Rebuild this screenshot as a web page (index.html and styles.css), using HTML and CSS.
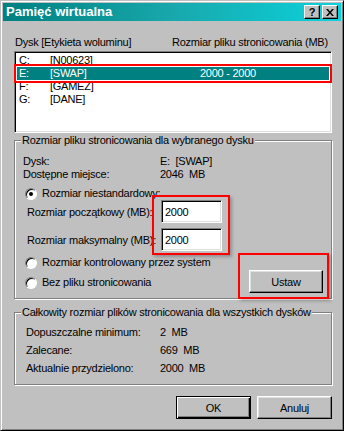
FILE: index.html
```html
<!DOCTYPE html>
<html lang="pl">
  <head>
    <meta charset="UTF-8" />
    <title>Pamięć wirtualna</title>
    <link rel="stylesheet" href="styles.css">
  </head>
  <body>
    <div class="window">
      <div class="titlebar">
        <span class="title">Pamięć wirtualna</span>
        <div class="title-buttons">
          <span class="tbtn help">?</span>
          <span class="tbtn close">
            <svg width="8" height="7" viewBox="0 0 8 7">
              <path d="M0 0h2l2 2.5 2-2.5h2l-3 3.5 3 3.5h-2l-2-2.5-2 2.5h-2l3-3.5z" fill="#000" />
            </svg>
          </span>
        </div>
      </div>

      <div class="content">
        <div class="list-head">
          <span class="col-name">Dysk [Etykieta woluminu]</span>
          <span class="col-size">Rozmiar pliku stronicowania (MB)</span>
        </div>
        <div class="listbox">
          <div class="row"><span class="c-drive">C:</span><span class="c-label">[N00623]</span></div>
          <div class="row sel"><span class="c-drive">E:</span><span class="c-label">[SWAP]</span><span class="c-size">2000 - 2000</span></div>
          <div class="row"><span class="c-drive">F:</span><span class="c-label">[GAMEZ]</span></div>
          <div class="row"><span class="c-drive">G:</span><span class="c-label">[DANE]</span></div>
        </div>

        <fieldset class="group group-drive">
          <legend>Rozmiar pliku stronicowania dla wybranego dysku</legend>
          <div class="info first"><span class="info-label">Dysk:</span><span class="val">E:  [SWAP]</span></div>
          <div class="info"><span class="info-label">Dostępne miejsce:</span><span class="val">2046  MB</span></div>

          <label class="option first"><span class="radio checked"></span>Rozmiar niestandardowy:</label>
          <div class="size-row">
            <span class="size-label">Rozmiar początkowy (MB):</span>
            <input class="field" type="text" value="2000">
          </div>
          <div class="size-row gap">
            <span class="size-label">Rozmiar maksymalny (MB):</span>
            <input class="field" type="text" value="2000">
          </div>

          <div class="option-set">
            <div class="options">
              <label class="option"><span class="radio"></span>Rozmiar kontrolowany przez system</label>
              <label class="option second"><span class="radio"></span>Bez pliku stronicowania</label>
            </div>
            <button class="btn btn-set">Ustaw</button>
          </div>
        </fieldset>

        <fieldset class="group group-total">
          <legend>Całkowity rozmiar plików stronicowania dla wszystkich dysków</legend>
          <div class="total first"><span class="total-label">Dopuszczalne minimum:</span><span class="val">2  MB</span></div>
          <div class="total"><span class="total-label">Zalecane:</span><span class="val">669  MB</span></div>
          <div class="total"><span class="total-label">Aktualnie przydzielono:</span><span class="val">2000  MB</span></div>
        </fieldset>

        <div class="actions">
          <button class="btn btn-default">OK</button>
          <button class="btn">Anuluj</button>
        </div>
      </div>

      <div class="mark mark-inputs"></div>
      <div class="mark mark-set"></div>
    </div>
  </body>
</html>
```

FILE: styles.css
```css
body {
  margin: 0;
  font: 11px "Liberation Sans", Arial, sans-serif;
  color: #000;
}

.window {
  position: relative;
  width: 344px;
  height: 431px;
  box-sizing: border-box;
  padding: 2px;
  background: #c0c0c0;
  border: 1px solid;
  border-color: #c0c0c0 #000 #000 #c0c0c0;
  box-shadow: inset 1px 1px #fff, inset -1px -1px #808080;
  white-space: nowrap;
  letter-spacing: -0.25px;
}

.titlebar {
  display: flex;
  align-items: center;
  justify-content: space-between;
  height: 18px;
  padding: 0 3px 0 3px;
  background: linear-gradient(to right, #008080, #18a8ac 50%, #0cd2dc);
}
.title {
  color: #fff;
  font-weight: bold;
  font-size: 13px;
  line-height: 18px;
  letter-spacing: 0;
}
.title-buttons {
  display: flex;
  gap: 2px;
}
.tbtn {
  display: flex;
  align-items: center;
  justify-content: center;
  width: 16px;
  height: 14px;
  box-sizing: border-box;
  background: #c0c0c0;
  border: 1px solid;
  border-color: #fff #000 #000 #fff;
  box-shadow: inset -1px -1px #808080;
  font-weight: bold;
  font-size: 11px;
  line-height: 12px;
  letter-spacing: 0;
}

.content {
  padding: 0 9px 0 11px;
}

.list-head {
  display: flex;
  margin-top: 15px;
  height: 13px;
  line-height: 13px;
  padding-left: 1px;
}
.col-name {
  flex: none;
  width: 157px;
}
.col-size {
  flex: none;
}

.listbox {
  margin-top: 2px;
  height: 82px;
  box-sizing: border-box;
  background: #fff;
  border: 1px solid;
  border-color: #808080 #fff #fff #808080;
  box-shadow: inset 1px 1px #000, inset -1px -1px #dfdfdf;
  padding: 2px 2px 0 2px;
}
.row {
  display: flex;
  height: 13px;
  line-height: 13px;
}
.row.sel {
  background: #008080;
  color: #fff;
  outline: 2px solid #f00;
  outline-offset: 1px;
}
.c-drive {
  flex: none;
  width: 31px;
  padding-left: 2px;
}
.c-label {
  flex: none;
  width: 150px;
}

.group {
  margin: 0;
  padding: 0 0 5px 0;
  border: 1px solid #808080;
  box-shadow: inset 1px 1px #fff, 1px 1px #fff;
}
.group legend {
  margin-left: 6px;
  padding: 0 1px;
  line-height: 13px;
  background: #c0c0c0;
}
.group-drive {
  margin-top: 1px;
}

.info {
  display: flex;
  height: 13px;
  line-height: 13px;
  padding-left: 8px;
}
.info.first {
  margin-top: 8px;
}
.info-label {
  flex: none;
  width: 137px;
}
.val {
  white-space: pre;
}

.option {
  display: flex;
  align-items: center;
  height: 13px;
  line-height: 13px;
  padding-left: 10px;
}
.option.first {
  margin-top: 6px;
}
.option.second {
  margin-top: 7px;
}
.radio {
  position: relative;
  flex: none;
  width: 12px;
  height: 12px;
  box-sizing: border-box;
  margin-right: 5px;
  border-radius: 50%;
  background: #fff;
  border: 1px solid;
  border-color: #808080 #fff #fff #808080;
  box-shadow: inset 1px 1px #000;
}
.radio.checked::after {
  content: "";
  position: absolute;
  left: 3px;
  top: 3px;
  width: 4px;
  height: 4px;
  border-radius: 50%;
  background: #000;
}

.size-row {
  display: flex;
  align-items: center;
  height: 23px;
  padding-left: 12px;
}
.size-row.gap {
  margin-top: 5px;
}
.size-label {
  flex: none;
  width: 134px;
}
.field {
  flex: none;
  width: 61px;
  height: 23px;
  box-sizing: border-box;
  margin: 0;
  padding: 0 3px;
  font: 11px "Liberation Sans", Arial, sans-serif;
  letter-spacing: -0.25px;
  color: #000;
  background: #fff;
  border: 1px solid;
  border-color: #808080 #fff #fff #808080;
  box-shadow: inset 1px 1px #000, inset -1px -1px #dfdfdf;
  outline: none;
}

.option-set {
  display: flex;
  align-items: flex-start;
  margin-top: 5px;
}
.options {
  flex: 1;
}

.btn {
  flex: none;
  width: 75px;
  height: 23px;
  box-sizing: border-box;
  margin: 0;
  padding: 0;
  font: 11px "Liberation Sans", Arial, sans-serif;
  letter-spacing: -0.25px;
  color: #000;
  background: #c0c0c0;
  border: 1px solid;
  border-color: #fff #000 #000 #fff;
  box-shadow: inset -1px -1px #808080, inset 1px 1px #dfdfdf;
}
.btn-set {
  width: 74px;
  margin: 14px 8px 0 0;
}
.btn-default {
  border-color: #000;
  box-shadow: inset 1px 1px #fff, inset -1px -1px #000, inset -2px -2px #808080;
}

.group-total {
  margin-top: 7px;
  padding-bottom: 9px;
}
.total {
  display: flex;
  height: 13px;
  line-height: 13px;
  padding-left: 11px;
  margin-top: 5px;
}
.total.first {
  margin-top: 7px;
}
.total-label {
  flex: none;
  width: 134px;
}

.actions {
  display: flex;
  justify-content: flex-end;
  gap: 6px;
  margin-top: 11px;
}

.mark {
  position: absolute;
  border: 2px solid #f00;
  box-shadow: 2px 2px 3px rgba(0, 0, 0, 0.25);
}
.mark-inputs {
  left: 151px;
  top: 194px;
  width: 74px;
  height: 56px;
}
.mark-set {
  left: 237px;
  top: 252px;
  width: 87px;
  height: 42px;
}
```
